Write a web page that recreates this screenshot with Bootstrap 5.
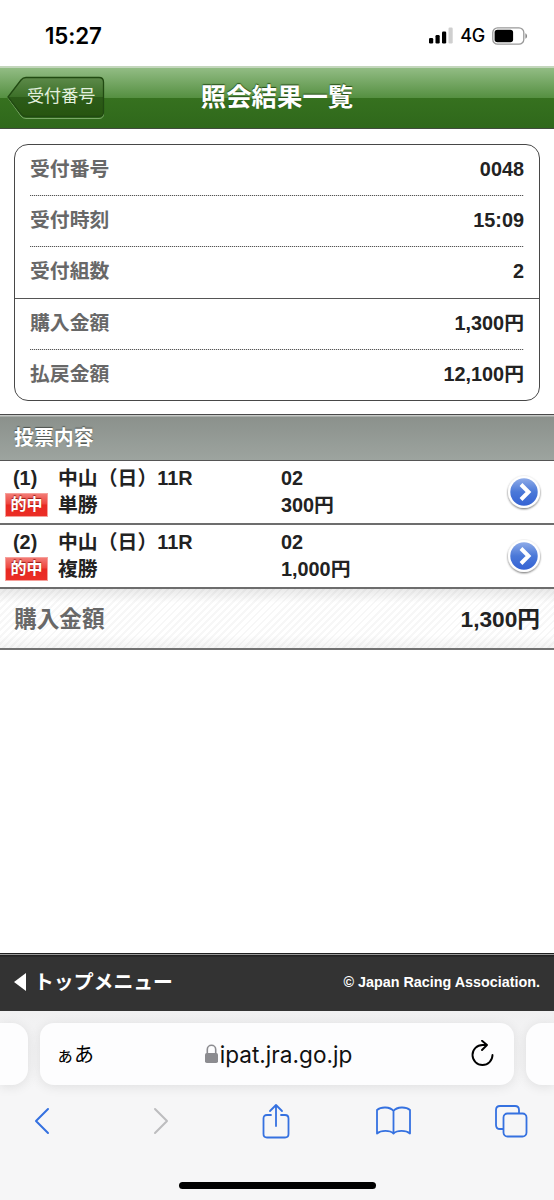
<!DOCTYPE html>
<html lang="ja">
<head>
<meta charset="utf-8">
<meta name="viewport" content="width=device-width, initial-scale=1">
<title>照会結果一覧</title>
<link rel="stylesheet" href="https://cdn.jsdelivr.net/npm/bootstrap@5.3.0/dist/css/bootstrap.min.css">
<style>
body{width:554px;height:1200px;overflow:hidden;background:#fff;color:#222;font-family:"Liberation Sans","Noto Sans CJK JP",sans-serif;font-size:19.85px;line-height:27px;font-weight:700}
svg{display:block;flex:none}
.status{height:66px;font-family:Inter,sans-serif;color:#000;padding:5px 26px 0 45px}
.clock{font-size:22.3px;font-weight:600;letter-spacing:-.1px}
.net{font-size:18px;font-weight:500;letter-spacing:-.2px;margin:0 7px}
.titlebar{height:63px;border-top:2px solid #c3d6bc;border-bottom:1px solid #414b3d;background:linear-gradient(#92bc84 0,#558f41 30px,#36711f 30px,#2f681b 60px)}
.titlebar h1{font-size:25.4px;font-weight:700;line-height:59px;color:#fff;text-shadow:0 -1px 1px #234d16}
.backbtn{left:6px;top:8px;width:99px;height:43px}
.backbtn span{left:21px;top:7px;font-size:17.1px;font-weight:400;color:#e3f0de;line-height:27px;white-space:nowrap}
.info{margin:15px 14px 0;height:257px;border:1px solid #484848;border-radius:14px}
.inforow{height:51px;margin:0 15px;padding-bottom:2px}
.dots{background:repeating-linear-gradient(90deg,#555 0 1px,#ddd 1px 2px) bottom/100% 1px no-repeat}
.group2{border-top:1px solid #555}
.group2 .dots{height:50.5px}
.key{color:#686868}
.section-head{height:47px;margin-top:13px;border-top:1px solid #4a4a4a;border-bottom:1px solid #555;background:linear-gradient(#c5c8c5 0 1px,#8b918c 2px,#9da49f 100%);color:#fff;padding:2px 14px 0;font-size:19.9px;text-shadow:0 -1px 1px #4d524e}
.bet{height:64px;border-bottom:2px solid #6d6d6d;padding:4px 12px 0 5px}
.c1{width:53px}.c2{width:223px}
.hit{display:block;width:43px;height:24px;margin-top:1px;background:linear-gradient(#f37a74 0,#ed453e 45%,#e82922 50%,#eb2e26);border:1px solid #f6a09b;color:#fff;font-size:16px;line-height:22px;text-align:center;text-shadow:0 -1px 1px #961b16}
.total{height:61px;padding:1px 14px 0;border-bottom:2px solid #727272;font-size:22.7px;background:linear-gradient(#00000016,#0000 14px,#0000 46px,#0000000b),repeating-linear-gradient(135deg,#fff 0 3px,#f7f7f7 3px 5px)}
.footbar{margin-top:303px;height:58px;border-top:1px solid #202020;background:linear-gradient(#999 0 1px,#222 1px 2px,#333 3px);color:#fff;padding:0 14px 1px}
.copy{font-size:14.35px}
.browser{height:190px;background:linear-gradient(#f1f1f2,#f6f6f7 80px)}
.tabs{padding-top:12px}
.tabcell{height:62px;background:#fdfdfe;box-shadow:0 2px 12px #00000018}
.peek{width:28px}
.addr{width:474px;border-radius:14px;margin:0 12px}
.url{font-family:Inter,sans-serif;font-size:22.6px;font-weight:400;color:#111}
.aa{font-family:"Noto Sans CJK JP",sans-serif;color:#000;font-weight:400;font-size:20px;padding-left:16px}
.aa small{font-size:18px}
.site{margin-left:-9px}
.reload{margin-right:19px}
.tools{height:72px;margin:0 -16px 0 -17px}
.homebar{width:197px;height:7px;border-radius:4px;background:#000;margin:25px auto 0}
</style>
</head>
<body>
<div class="status d-flex align-items-center justify-content-between">
  <span class="clock">15:27</span>
  <div class="d-flex align-items-center">
    <svg width="25" height="17" viewBox="0 0 25 17"><rect x="1" y="11" width="4.200" height="5.500" rx="1.200"/><rect x="7.500" y="8" width="4.200" height="8.500" rx="1.200"/><rect x="14" y="4.500" width="4.200" height="12" rx="1.200"/><rect x="20.500" y="0.500" width="4.200" height="16" rx="1.200" fill="#cfcfcf"/></svg>
    <span class="net">4G</span>
    <svg width="36" height="18" viewBox="0 0 36 18"><rect x=".8" y=".8" width="31" height="16.400" rx="4.800" fill="none" stroke="#999" stroke-width="1.300"/><rect x="2.600" y="2.800" width="18.500" height="12.500" rx="2.800"/><path d="M33.400 6.200c2.200 1 2.200 4.600 0 5.600z" fill="#888"/></svg>
  </div>
</div>
<header class="titlebar position-relative text-center">
  <a class="backbtn position-absolute" href="#">
    <svg width="99" height="43" viewBox="0 0 99 43"><defs><linearGradient id="bg" x2="0" y2="1"><stop stop-color="#5d8a4a"/><stop offset=".5" stop-color="#3c7028"/><stop offset=".51" stop-color="#2c5b19"/><stop offset="1" stop-color="#27550f"/></linearGradient></defs><path d="M2 22 15 5q2-2.500 5-2.500h73q4.500 0 4.500 4.500v31q0 4.500-4.500 4.500H20q-3 0-5-2.500z" fill="none" stroke="#7aa866"/><path d="M2 21 15 4q2-2.500 5-2.500h73q4.500 0 4.500 4.500v30q0 4.500-4.500 4.500H20q-3 0-5-2.500z" fill="url(#bg)" stroke="#214a12" stroke-width="1.300"/></svg>
    <span class="position-absolute">受付番号</span>
  </a>
  <h1 class="m-0">照会結果一覧</h1>
</header>
<main>
  <section class="info">
    <div class="inforow dots d-flex align-items-center justify-content-between"><span class="key">受付番号</span><span>0048</span></div>
    <div class="inforow dots d-flex align-items-center justify-content-between"><span class="key">受付時刻</span><span>15:09</span></div>
    <div class="inforow d-flex align-items-center justify-content-between"><span class="key">受付組数</span><span>2</span></div>
    <div class="group2">
      <div class="inforow dots d-flex align-items-center justify-content-between"><span class="key">購入金額</span><span>1,300円</span></div>
      <div class="inforow d-flex align-items-center justify-content-between"><span class="key">払戻金額</span><span>12,100円</span></div>
    </div>
  </section>
  <h2 class="section-head mb-0 d-flex align-items-center fw-bold">投票内容</h2>
  <div class="bet d-flex">
    <div class="c1"><span class="d-block ps-2">(1)</span><span class="hit">的中</span></div>
    <div class="c2">中山（日）11R<br>単勝</div>
    <div class="flex-grow-1">02<br>300円</div>
    <svg class="mt-2" width="36" height="38" viewBox="0 0 36 38"><defs><linearGradient id="bl" x2="0" y2="1"><stop stop-color="#8eabe8"/><stop offset=".5" stop-color="#4a78d8"/><stop offset="1" stop-color="#3563d4"/></linearGradient><filter id="sh" x="-20%" y="-20%" width="140%" height="150%"><feDropShadow dx="0" dy="1" stdDeviation="1.300" flood-opacity=".6"/></filter></defs><circle cx="18" cy="19" r="16" fill="#fff" filter="url(#sh)"/><circle cx="18" cy="19" r="13.700" fill="url(#bl)"/><path d="m15 11.500 7.500 7.500-7.500 7.500" fill="none" stroke="#fff" stroke-width="4"/></svg>
  </div>
  <div class="bet d-flex">
    <div class="c1"><span class="d-block ps-2">(2)</span><span class="hit">的中</span></div>
    <div class="c2">中山（日）11R<br>複勝</div>
    <div class="flex-grow-1">02<br>1,000円</div>
    <svg class="mt-2" width="36" height="38" viewBox="0 0 36 38"><circle cx="18" cy="19" r="16" fill="#fff" filter="url(#sh)"/><circle cx="18" cy="19" r="13.700" fill="url(#bl)"/><path d="m15 11.500 7.500 7.500-7.500 7.500" fill="none" stroke="#fff" stroke-width="4"/></svg>
  </div>
  <div class="total d-flex align-items-center justify-content-between"><span class="key">購入金額</span><span>1,300円</span></div>
</main>
<footer class="footbar d-flex align-items-center justify-content-between">
  <div class="d-flex align-items-center"><svg width="20" height="20" viewBox="0 0 20 20"><path d="M0 10 12 1v18z" fill="#fff"/></svg><span>トップメニュー</span></div>
  <span class="copy">© Japan Racing Association.</span>
</footer>
<div class="browser">
  <div class="tabs d-flex">
    <div class="tabcell peek flex-shrink-0 rounded-end-4"></div>
    <div class="tabcell addr flex-shrink-0 d-flex align-items-center justify-content-between">
      <span class="aa"><small>ぁ</small>あ</span>
      <div class="site d-flex align-items-center">
        <svg width="17" height="20" viewBox="0 0 17 20"><path d="M4.300 10V5.500a4.200 4.200 0 0 1 8.400 0V10" fill="none" stroke="#8c8c90" stroke-width="1.600"/><rect x="2" y="9" width="13" height="10" rx="1.800" fill="#8c8c90"/></svg>
        <span class="url">ipat.jra.go.jp</span>
      </div>
      <svg class="reload" width="25" height="28" viewBox="0 0 25 28" fill="none" stroke="#000" stroke-width="1.900" stroke-linecap="round" stroke-linejoin="round"><path d="M22.500 15a10 10 0 1 1-10-10h4M12 .8 17 5l-5 5"/></svg>
    </div>
    <div class="tabcell flex-grow-1 rounded-start-4"></div>
  </div>
  <div class="tools row row-cols-5 g-0 align-items-center">
    <div><svg class="mx-auto" width="16" height="28" viewBox="0 0 16 28" fill="none" stroke="#3571e0" stroke-width="2" stroke-linecap="round" stroke-linejoin="round"><path d="M14 2 2 14l12 12"/></svg></div>
    <div><svg class="mx-auto" width="20" height="28" viewBox="-4 0 20 28" fill="none" stroke="#bdbdbf" stroke-width="2" stroke-linecap="round" stroke-linejoin="round"><path d="m2 2 12 12L2 26"/></svg></div>
    <div><svg class="mx-auto" width="28" height="36" viewBox="0 0 28 36" fill="none" stroke="#3571e0" stroke-width="1.800" stroke-linecap="round" stroke-linejoin="round"><path d="M9 12H5q-3.500 0-3.500 3.500v15.500q0 3.500 3.500 3.500h18q3.500 0 3.500-3.500V15.500q0-3.500-3.500-3.500h-4M14 23V2M8 8l6-6 6 6"/></svg></div>
    <div><svg class="mx-auto" width="35" height="30" viewBox="0 0 35 30" fill="none" stroke="#3571e0" stroke-width="1.800" stroke-linejoin="round"><path d="M17.500 5C14 .5 5 .5 1 4v23.500c4-3.500 13-3.500 16.500 0 3.500-3.500 12.500-3.500 16.500 0V4C30 .5 21 .5 17.500 5zv22.500"/></svg></div>
    <div><svg class="mx-auto" width="33" height="33" viewBox="0 0 33 33" fill="none" stroke="#3571e0" stroke-width="1.800"><path d="M8.500 24H5q-4 0-4-4V5q0-4 4-4h15q4 0 4 4v3.500"/><rect x="8.500" y="8.500" width="23" height="23" rx="4"/></svg></div>
  </div>
  <div class="homebar"></div>
</div>
<script src="https://cdn.jsdelivr.net/npm/bootstrap@5.3.0/dist/js/bootstrap.bundle.min.js"></script>
</body>
</html>
